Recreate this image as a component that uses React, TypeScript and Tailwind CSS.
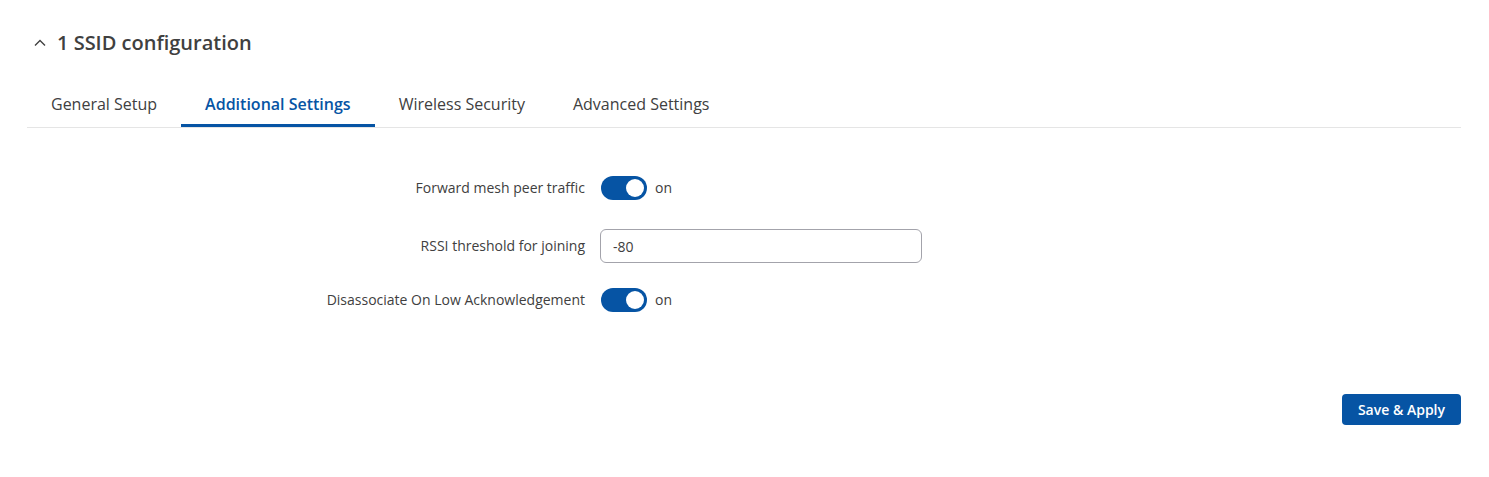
import { useState } from "react";

const font = { fontFamily: '"Open Sans", "Noto Sans", sans-serif' };

function Toggle({ on, onChange }: { on: boolean; onChange: () => void }) {
  return (
    <div className="flex items-center gap-2">
      <button
        type="button"
        onClick={onChange}
        className={`relative h-6 w-[46px] rounded-full ${on ? "bg-[#0654a4]" : "bg-gray-300"}`}
      >
        <span
          className={`absolute top-[3px] h-[18px] w-[18px] rounded-full bg-white ${on ? "left-[25px]" : "left-[3px]"}`}
        />
      </button>
      <span className="text-sm text-[#404040]">{on ? "on" : "off"}</span>
    </div>
  );
}

function Row({ label, children }: { label: string; children: React.ReactNode }) {
  return (
    <div className="flex items-center gap-4">
      <label className="w-[558px] text-right text-sm text-[#404040]">{label}</label>
      {children}
    </div>
  );
}

export default function App() {
  const [forward, setForward] = useState(true);
  const [disassoc, setDisassoc] = useState(true);
  const [rssi, setRssi] = useState("-80");
  const tabs = ["General Setup", "Additional Settings", "Wireless Security", "Advanced Settings"];
  const active = 1;

  return (
    <div className="min-h-screen bg-white pl-[27px] pr-[28px] pt-[28px]" style={font}>
      <div className="flex items-center gap-[10px] pl-[6px]">
        <svg width="14" height="14" viewBox="0 0 14 14" className="text-[#404040]">
          <path d="M2 9.5 L7 4.5 L12 9.5" fill="none" stroke="currentColor" strokeWidth="1.4" />
        </svg>
        <h2 className="text-[20px] font-semibold text-[#404040]">1 SSID configuration</h2>
      </div>

      <div className="mt-[34px] flex border-b border-[#e5e5e5]">
        {tabs.map((t, i) => (
          <div
            key={t}
            className={`px-6 pb-[8px] text-base ${
              i === active
                ? "border-b-[3px] border-[#0654a4] font-semibold text-[#0654a4]"
                : "border-b-[3px] border-transparent text-[#404040]"
            }`}
          >
            {t}
          </div>
        ))}
      </div>

      <div className="mt-[48px] flex flex-col">
        <Row label="Forward mesh peer traffic">
          <Toggle on={forward} onChange={() => setForward(!forward)} />
        </Row>
        <div className="mt-[29px]">
          <Row label="RSSI threshold for joining">
            <input
              value={rssi}
              onChange={(e) => setRssi(e.target.value)}
              className="-ml-px h-[34px] w-[322px] rounded-md border border-[#a3a3ab] px-3 text-sm text-[#404040] outline-none"
            />
          </Row>
        </div>
        <div className="mt-[25px]">
          <Row label="Disassociate On Low Acknowledgement">
            <Toggle on={disassoc} onChange={() => setDisassoc(!disassoc)} />
          </Row>
        </div>
      </div>

      <div className="mt-[82px] flex justify-end">
        <button className="h-[31px] rounded bg-[#0654a4] px-4 text-sm font-semibold text-white">
          Save &amp; Apply
        </button>
      </div>
    </div>
  );
}
